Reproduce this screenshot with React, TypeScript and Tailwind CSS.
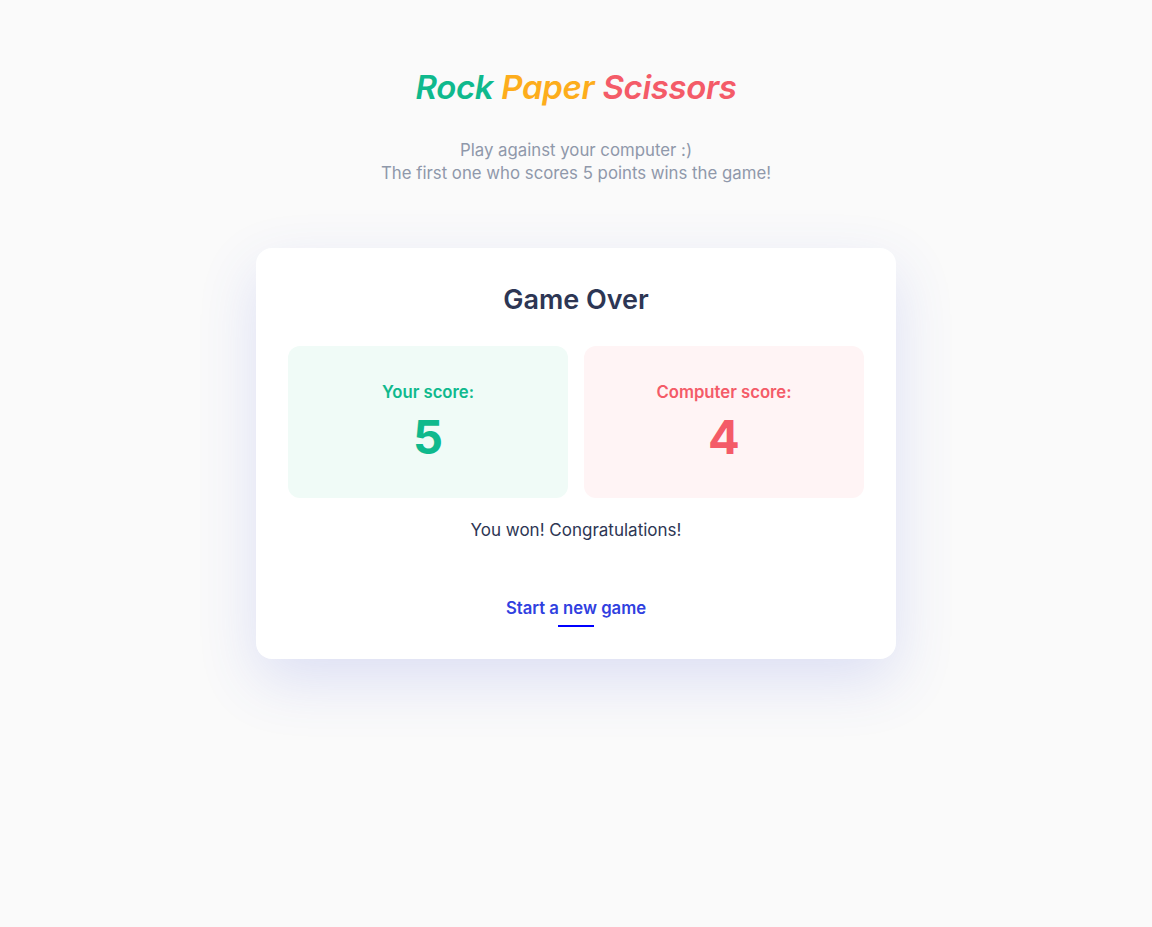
export default function App() {
  const font = { fontFamily: 'Inter, "Noto Sans", sans-serif' }
  return (
    <div className="min-h-[927px] bg-[#fafafa] flex flex-col items-center" style={font}>
      <h1 className="mt-[67px] text-[33px] leading-[40px] font-semibold italic tracking-[-0.01em]">
        <span className="text-[#0fb98d]">Rock</span>{' '}
        <span className="text-[#fdad1c]">Paper</span>{' '}
        <span className="text-[#f45b68]">Scissors</span>
      </h1>
      <div className="mt-[32px] text-[16.8px] leading-[23px] text-[#8f98aa] text-center">
        <p>Play against your computer :)</p>
        <p>The first one who scores 5 points wins the game!</p>
      </div>

      <div className="mt-[63px] w-[640px] bg-white rounded-2xl px-8 pt-9 pb-8 flex flex-col items-center shadow-[0_22px_60px_rgba(70,90,220,0.16)]">
        <h2 className="text-[27px] leading-[32px] font-semibold text-[#2d3654]">Game Over</h2>

        <div className="mt-[30px] w-full grid grid-cols-2 gap-4">
          <div className="h-[152px] rounded-xl bg-[#f0fbf7] flex flex-col items-center justify-center">
            <span className="text-[16.7px] leading-6 font-semibold text-[#0fb98d]">Your score:</span>
            <span className="mt-[5px] text-[47px] leading-[56px] font-bold text-[#0fb98d]">5</span>
          </div>
          <div className="h-[152px] rounded-xl bg-[#fff4f5] flex flex-col items-center justify-center">
            <span className="text-[16.7px] leading-6 font-semibold text-[#f45b68]">Computer score:</span>
            <span className="mt-[5px] text-[47px] leading-[56px] font-bold text-[#f45b68]">4</span>
          </div>
        </div>

        <p className="mt-5 text-[17px] leading-6 text-[#2d3654]">You won! Congratulations!</p>

        <button className="mt-[54px] flex flex-col items-center text-[16.7px] leading-6 font-semibold text-[#3040e0]">
          Start a new game
          <span className="mt-[5px] w-9 h-0.5 bg-[#0000ff]"></span>
        </button>
      </div>
    </div>
  )
}
